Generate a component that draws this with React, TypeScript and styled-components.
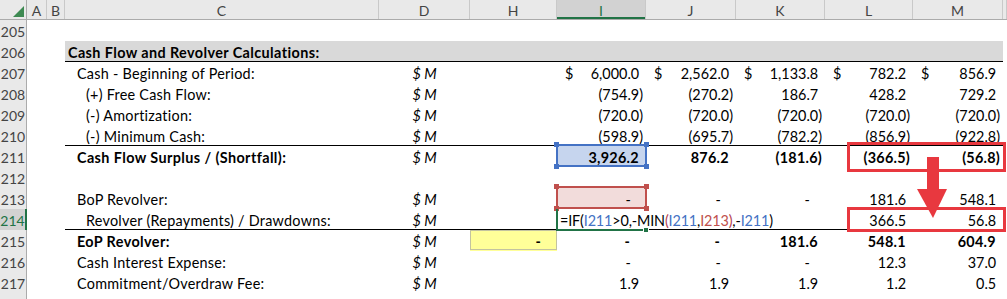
import React from "react";
import styled, { createGlobalStyle } from "styled-components";

const GRID = "27px 20px 18px 314px 91px 87px 89px 90px 89px 88px 90px 1fr";
const RED = "#e8383f";
const GREEN = "#217346";
const FONT = `Lato, "Open Sans", sans-serif`;

type Val = string | null;

interface LineItem {
  n: number;
  label?: string;
  indent?: number;
  bold?: boolean;
  unit?: boolean;
  band?: boolean;
  rule?: boolean;
  cur?: boolean;
  h?: Val;
  vals?: Val[];
}

const rows: LineItem[] = [
  { n: 205 },
  { n: 206, label: "Cash Flow and Revolver Calculations:", indent: 0, bold: true, band: true, rule: true },
  { n: 207, label: "Cash - Beginning of Period:", indent: 1, unit: true, cur: true, vals: ["6,000.0", "2,562.0", "1,133.8", "782.2", "856.9"] },
  { n: 208, label: "(+) Free Cash Flow:", indent: 2, unit: true, vals: ["(754.9)", "(270.2)", "186.7", "428.2", "729.2"] },
  { n: 209, label: "(-) Amortization:", indent: 2, unit: true, vals: ["(720.0)", "(720.0)", "(720.0)", "(720.0)", "(720.0)"] },
  { n: 210, label: "(-) Minimum Cash:", indent: 2, unit: true, rule: true, vals: ["(598.9)", "(695.7)", "(782.2)", "(856.9)", "(922.8)"] },
  { n: 211, label: "Cash Flow Surplus / (Shortfall):", indent: 1, bold: true, unit: true, vals: ["3,926.2", "876.2", "(181.6)", "(366.5)", "(56.8)"] },
  { n: 212 },
  { n: 213, label: "BoP Revolver:", indent: 1, unit: true, vals: ["-", "-", "-", "181.6", "548.1"] },
  { n: 214, label: "Revolver (Repayments) / Drawdowns:", indent: 2, unit: true, rule: true, vals: [null, null, null, "366.5", "56.8"] },
  { n: 215, label: "EoP Revolver:", indent: 1, bold: true, unit: true, h: "-", vals: ["-", "-", "181.6", "548.1", "604.9"] },
  { n: 216, label: "Cash Interest Expense:", indent: 1, unit: true, vals: ["-", "-", "-", "12.3", "37.0"] },
  { n: 217, label: "Commitment/Overdraw Fee:", indent: 1, unit: true, vals: ["1.9", "1.9", "1.9", "1.2", "0.5"] },
  { n: 218 },
];

const columns = ["A", "B", "C", "D", "H", "I", "J", "K", "L", "M", ""];

const GlobalStyle = createGlobalStyle`
  html, body { margin: 0; padding: 0; background: #fff; }
  body { font-family: ${FONT}; overflow: hidden; color: #000; }
`;

const Sheet = styled.div`
  position: relative;
  width: 1007px;
  height: 299px;
  overflow: hidden;
  font-size: 14.4px;
`;

const HeaderRow = styled.div`
  display: grid;
  grid-template-columns: ${GRID};
  height: 20px;
  background: #e9e9e9;
  border-bottom: 1px solid #ababab;
  box-sizing: border-box;
  font-size: 14px;
`;

const Corner = styled.div`
  border-right: 1px solid #ababab;
  display: flex;
  align-items: flex-end;
  justify-content: flex-end;
  padding: 0 2px 2px 0;
`;

const ColHead = styled.div<{ $active?: boolean }>`
  display: flex;
  align-items: center;
  justify-content: center;
  border-right: 1px solid #c9c9c9;
  color: ${(p) => (p.$active ? GREEN : "#444")};
  background: ${(p) => (p.$active ? "#d2d2d2" : "transparent")};
  box-shadow: ${(p) => (p.$active ? `inset 0 -2px 0 ${GREEN}` : "none")};
  padding-top: 1px;
`;

const Row = styled.div`
  display: grid;
  grid-template-columns: ${GRID};
  height: 21px;
`;

const RowHead = styled.div<{ $active?: boolean }>`
  display: flex;
  align-items: center;
  justify-content: center;
  padding-top: 2px;
  font-size: 14px;
  background: ${(p) => (p.$active ? "#d2d2d2" : "#e9e9e9")};
  color: ${(p) => (p.$active ? GREEN : "#444")};
  border-right: ${(p) => (p.$active ? `2px solid ${GREEN}` : "1px solid #ababab")};
`;

const Blank = styled.div``;

const Cell = styled.div<{ $band?: boolean; $rule?: boolean; $bold?: boolean }>`
  position: relative;
  display: flex;
  align-items: center;
  box-sizing: border-box;
  padding-top: 3px;
  white-space: nowrap;
  font-weight: ${(p) => (p.$bold ? 700 : 400)};
  letter-spacing: ${(p) => (p.$bold ? "0.25px" : "0")};
  background: ${(p) => (p.$band ? "#d9d9d9" : "transparent")};
  border-bottom: 1px solid ${(p) => (p.$rule ? "#000" : "transparent")};
`;

const Label = styled(Cell)<{ $indent: number }>`
  padding-left: ${(p) => 3 + p.$indent * 9}px;
  letter-spacing: ${(p) => (p.$bold ? "0.4px" : "0.25px")};
`;

const Unit = styled(Cell)`
  justify-content: center;
  font-style: italic;
  font-weight: 400;
  letter-spacing: 0;
`;

const Value = styled(Cell)<{ $fill?: string; $cur?: boolean }>`
  justify-content: ${(p) => (p.$cur ? "space-between" : "flex-end")};
  padding-left: 8px;
  padding-right: 3px;
  ${(p) => p.$fill && `background: ${p.$fill}; box-shadow: inset 0 0 0 1px #c3c3a0;`}
`;

const Formula = styled(Cell)`
  padding-left: 3px;
  overflow: visible;
  z-index: 2;
  letter-spacing: -0.15px;
`;

const Hidden = styled.span`
  visibility: hidden;
`;

const Ref = styled.span<{ $c: string }>`
  color: ${(p) => p.$c};
`;

const Frame = styled.div<{ $c: string; $fill: string }>`
  position: absolute;
  inset: -2px -1px -1px -1px;
  border: 2px solid ${(p) => p.$c};
  background: ${(p) => p.$fill};
  z-index: -1;
`;

const Handle = styled.span<{ $c: string; $x: "left" | "right"; $y: "top" | "bottom" }>`
  position: absolute;
  width: 5px;
  height: 5px;
  background: ${(p) => p.$c};
  ${(p) => p.$x}: -4px;
  ${(p) => p.$y}: -4px;
`;

const ValueText = styled.span`
  position: relative;
  z-index: 1;
`;

const ActiveFrame = styled.div`
  position: absolute;
  left: -1px;
  right: 0;
  top: 0;
  bottom: -2px;
  border-left: 2px solid ${GREEN};
  border-bottom: 2px solid ${GREEN};
  pointer-events: none;
`;

const FillHandle = styled.span`
  position: absolute;
  right: -3px;
  bottom: -4px;
  width: 6px;
  height: 6px;
  background: ${GREEN};
  border: 1px solid #fff;
  box-sizing: border-box;
`;

const Callout = styled.div<{ $top: number; $height: number }>`
  position: absolute;
  left: 847px;
  width: 159px;
  top: ${(p) => p.$top}px;
  height: ${(p) => p.$height}px;
  border: 3px solid ${RED};
  box-sizing: border-box;
  z-index: 5;
`;

const Arrow = styled.svg`
  position: absolute;
  left: 917px;
  top: 157px;
  z-index: 6;
`;

const Num: React.FC<{ v: string }> = ({ v }) => {
  if (v === "-") return <>-<Hidden>0)</Hidden></>;
  if (v.startsWith("(")) return <>{v}</>;
  return <>{v}<Hidden>)</Hidden></>;
};

const RefFrame: React.FC<{ c: string; fill: string }> = ({ c, fill }) => (
  <Frame $c={c} $fill={fill}>
    <Handle $c={c} $x="left" $y="top" />
    <Handle $c={c} $x="right" $y="top" />
    <Handle $c={c} $x="left" $y="bottom" />
    <Handle $c={c} $x="right" $y="bottom" />
  </Frame>
);

const refs: Record<number, { c: string; fill: string }> = {
  211: { c: "#4472c4", fill: "#c6d5ee" },
  213: { c: "#c0504d", fill: "#f2dcdb" },
};

const FormulaText = () => (
  <>
    =IF(<Ref $c="#4472c4">I211</Ref>&gt;0,-MIN<Ref $c="#b4404f">(</Ref>
    <Ref $c="#4472c4">I211</Ref>,<Ref $c="#c0504d">I213</Ref>
    <Ref $c="#b4404f">)</Ref>,-<Ref $c="#4472c4">I211</Ref>)
  </>
);

export default function App() {
  return (
    <>
      <GlobalStyle />
      <Sheet>
        <HeaderRow>
          <Corner>
            <svg width="11" height="11" viewBox="0 0 11 11">
              <polygon points="0,11 11,0 11,11" fill="#3e8a52" />
            </svg>
          </Corner>
          {columns.map((c, i) => (
            <ColHead key={i} $active={c === "I"}>{c}</ColHead>
          ))}
        </HeaderRow>

        {rows.map((r) => {
          const props = { $band: r.band, $rule: r.rule, $bold: r.bold };
          const vals = r.vals ?? [null, null, null, null, null];
          return (
            <Row key={r.n}>
              <RowHead $active={r.n === 214}>{r.n < 218 ? r.n : ""}</RowHead>
              <Blank />
              <Blank />
              <Label {...props} $indent={r.indent ?? 0}>{r.label}</Label>
              <Unit {...props}>{r.unit ? "$ M" : ""}</Unit>
              <Value {...props} $fill={r.h ? "#ffff99" : undefined}>
                {r.h && <Num v={r.h} />}
              </Value>
              {vals.map((v, i) => {
                if (r.n === 214 && i === 0) {
                  return (
                    <Formula key={i} {...props}>
                      <FormulaText />
                      <ActiveFrame>
                        <FillHandle />
                      </ActiveFrame>
                    </Formula>
                  );
                }
                const ref = i === 0 ? refs[r.n] : undefined;
                return (
                  <Value key={i} {...props} $cur={r.cur} style={ref ? { zIndex: 1 } : undefined}>
                    {ref && <RefFrame c={ref.c} fill={ref.fill} />}
                    {r.cur && <ValueText>$</ValueText>}
                    {v && (
                      <ValueText>
                        <Num v={v} />
                      </ValueText>
                    )}
                  </Value>
                );
              })}
              <Blank />
            </Row>
          );
        })}

        <Callout $top={142} $height={30} />
        <Callout $top={207} $height={25} />
        <Arrow width="30" height="62" viewBox="0 0 30 62">
          <rect x="10" y="0" width="12" height="34" fill={RED} />
          <polygon points="0,32 30,32 16,61" fill={RED} />
        </Arrow>
      </Sheet>
    </>
  );
}
